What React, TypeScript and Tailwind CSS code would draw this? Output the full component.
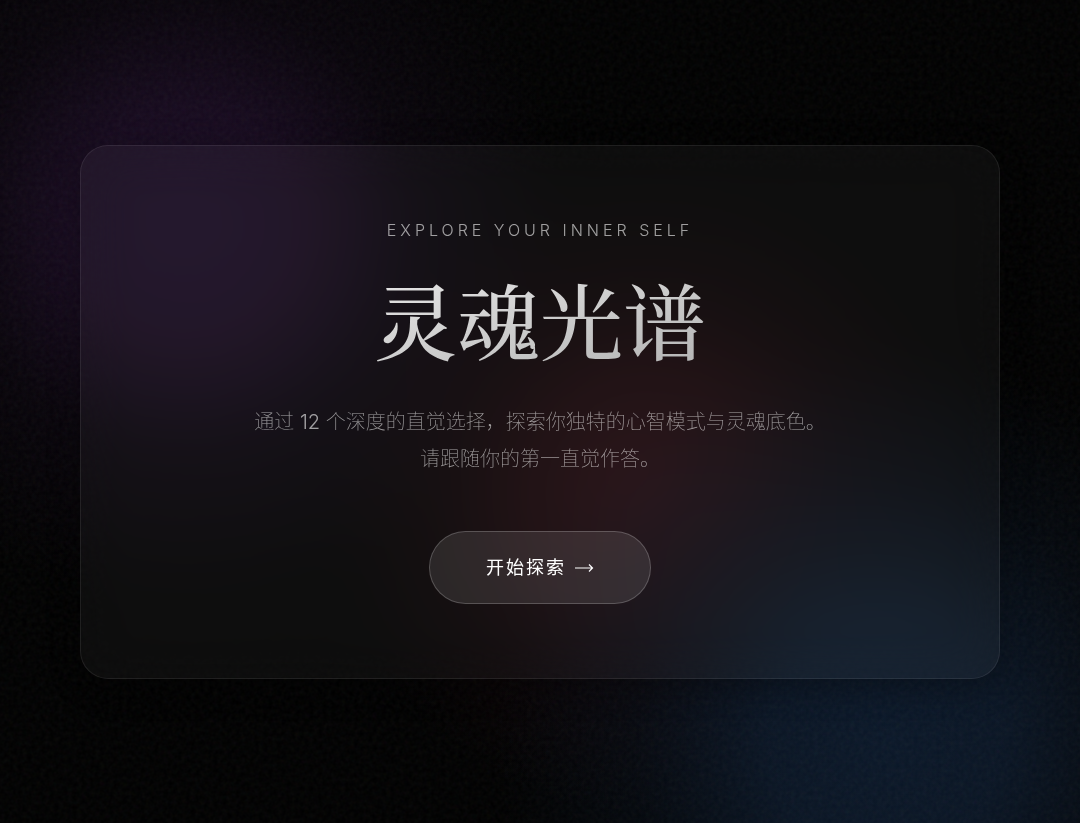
// Fine film grain laid over the coloured glow
function Grain() {
  return (
    <svg className="pointer-events-none absolute inset-0 h-full w-full opacity-5" aria-hidden="true">
      <filter id="grain">
        <feTurbulence type="fractalNoise" baseFrequency="0.22" numOctaves="2" stitchTiles="stitch" />
      </filter>
      <rect width="100%" height="100%" filter="url(#grain)" />
    </svg>
  );
}

// Purple, red and blue lights behind the glass card
function Glow() {
  return (
    <div className="absolute inset-0" aria-hidden="true">
      <div className="absolute inset-0 bg-[radial-gradient(circle_380px_at_17%_27%,#190b23_0%,#170a1ff0_30%,#0f071480_60%,transparent_100%)]" />
      <div className="absolute inset-0 bg-[radial-gradient(circle_320px_at_60%_60%,#22090e_0%,#1e080ccc_30%,#14050966_65%,transparent_100%)]" />
      <div className="absolute inset-0 bg-[radial-gradient(circle_390px_at_82%_90%,#0a1728_0%,#0a1626ee_30%,#070f1a80_65%,transparent_100%)]" />
    </div>
  );
}

function Arrow() {
  return (
    <svg className="h-5 w-5" viewBox="0 0 20 20" fill="none" stroke="currentColor" strokeWidth="1.2" aria-hidden="true">
      <path d="M1 10h17.5M15 6.5l3.5 3.5-3.5 3.5" />
    </svg>
  );
}

export default function App() {
  return (
    <main className="relative flex min-h-screen items-center justify-center overflow-hidden bg-black px-20 py-12 font-['Inter','Noto_Sans_CJK_SC',sans-serif] text-white">
      <Glow />
      <Grain />

      <section className="relative flex w-full max-w-5xl flex-col items-center rounded-[28px] border border-white/8 bg-white/4 px-12 pt-[72px] pb-[74px] text-center shadow-[0_8px_32px_rgba(0,0,0,0.3)] backdrop-blur-xl">
        <p className="text-base leading-6 font-light tracking-[4px] text-white/60 uppercase">Explore Your Inner Self</p>

        <h1 className="mt-7 bg-linear-to-br from-[#e8e8e8] to-[#b4b4b4] bg-clip-text font-['Noto_Serif_CJK_SC','Noto_Serif_SC','Noto_Sans_CJK_SC',serif] text-[83px] leading-[96px] font-medium text-transparent">
          灵魂光谱
        </h1>

        <p className="mt-[38px] text-xl leading-[37px] font-thin text-white/60">
          通过 <span className="font-light">12</span> 个深度的直觉选择，探索你独特的心智模式与灵魂底色。
          <br />
          请跟随你的第一直觉作答。
        </p>

        <button
          type="button"
          className="mt-[53px] flex h-[73px] cursor-pointer items-center gap-2 rounded-full border border-white/20 bg-white/10 px-14 pt-px text-lg tracking-[2px] transition hover:bg-white/15"
        >
          开始探索
          <Arrow />
        </button>
      </section>
    </main>
  );
}
